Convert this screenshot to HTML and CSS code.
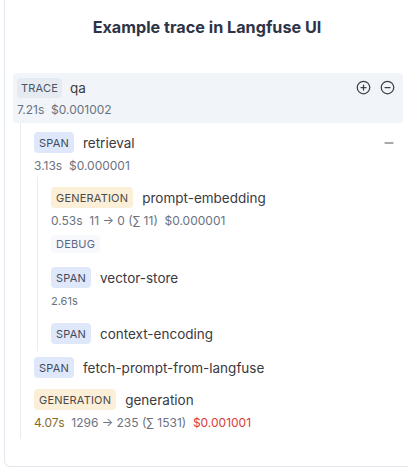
FILE: index.html
```html
<!DOCTYPE html>
<html>
<head>
<meta charset="utf-8">
<link rel="stylesheet" href="styles.css">
</head>
<body>
<div class="card">
  <h1 class="title">Example trace in Langfuse UI</h1>
  <div class="trace">
    <div class="row">
      <span class="badge b-trace">TRACE</span>
      <span class="name">qa</span>
      <span class="actions">
        <svg width="15" height="15" viewBox="0 0 24 24" fill="none" stroke="#3f3f46" stroke-width="2" stroke-linecap="round"><circle cx="12" cy="12" r="10"/><path d="M8 12h8M12 8v8"/></svg>
        <svg width="15" height="15" viewBox="0 0 24 24" fill="none" stroke="#3f3f46" stroke-width="2" stroke-linecap="round"><circle cx="12" cy="12" r="10"/><path d="M8 12h8"/></svg>
      </span>
    </div>
    <div class="metrics">7.21s&nbsp;&nbsp;$0.001002</div>
  </div>
  <div class="children outer">
    <div class="node has-children">
      <div class="row">
        <span class="badge b-span">SPAN</span>
        <span class="name">retrieval</span>
        <span class="actions">
          <svg width="12" height="12" viewBox="0 0 24 24" fill="none" stroke="#52525b" stroke-width="2" stroke-linecap="round"><path d="M4 12h16"/></svg>
        </span>
      </div>
      <div class="metrics">3.13s&nbsp;&nbsp;$0.000001</div>
      <div class="children inner">
        <div class="node">
          <div class="row">
            <span class="badge b-gen">GENERATION</span>
            <span class="name">prompt-embedding</span>
          </div>
          <div class="metrics">0.53s&nbsp;&nbsp;11 → 0 (∑ 11)&nbsp;&nbsp;$0.000001</div>
          <span class="badge b-debug">DEBUG</span>
        </div>
        <div class="node">
          <div class="row">
            <span class="badge b-span">SPAN</span>
            <span class="name">vector-store</span>
          </div>
          <div class="metrics small">2.61s</div>
        </div>
        <div class="node">
          <div class="row">
            <span class="badge b-span">SPAN</span>
            <span class="name">context-encoding</span>
          </div>
        </div>
      </div>
    </div>
    <div class="node">
      <div class="row">
        <span class="badge b-span">SPAN</span>
        <span class="name">fetch-prompt-from-langfuse</span>
      </div>
    </div>
    <div class="node">
      <div class="row">
        <span class="badge b-gen">GENERATION</span>
        <span class="name">generation</span>
      </div>
      <div class="metrics"><span class="latency">4.07s</span>&nbsp;&nbsp;1296 → 235 (∑ 1531)&nbsp;&nbsp;<span class="cost">$0.001001</span></div>
    </div>
  </div>
</div>
</body>
</html>
```

FILE: styles.css
```css
html, body {
  margin: 0;
  padding: 0;
  background: #ffffff;
}
body {
  font-family: Inter, "Noto Sans", "Liberation Sans", sans-serif;
  color: #3f3f46;
}
.card {
  margin-left: 4px;
  width: 410px;
  height: 467px;
  box-sizing: border-box;
  border-left: 1px solid #e2e8f0;
  border-bottom: 1px solid #e2e8f0;
  border-bottom-left-radius: 6px;
  padding: 17px 0 0 0;
}
.title {
  margin: 0 0 36px 0;
  width: 404px;
  text-align: center;
  font-size: 16.2px;
  line-height: 20px;
  font-weight: 700;
  color: #2e3447;
}
.trace {
  margin: 0 5px 0 8px;
  width: 390px;
  box-sizing: border-box;
  background: #f1f5f9;
  border-radius: 4px;
  padding: 4px 8px 5px 4px;
}
.row {
  display: flex;
  align-items: center;
  height: 21px;
}
.badge {
  display: inline-flex;
  align-items: center;
  height: 21px;
  padding: 0 5px;
  border-radius: 4px;
  font-size: 11px;
  letter-spacing: 0.2px;
  color: #4b5563;
}
.b-trace { background: #e6eaf1; height: 20px; padding: 0 4px; }
.b-trace + .name { margin-left: 8px; }
.b-span { background: #dfe8fa; color: #3f4a5c; }
.b-gen { background: #fcefd8; color: #4a4a4a; }
.b-debug {
  background: #f6f8fb;
  color: #5d6887;
  height: 18px;
  margin-top: 6px;
}
.name {
  margin-left: 9px;
  font-size: 13.5px;
  color: #3a3a40;
}
.actions {
  margin-left: auto;
  display: flex;
  gap: 9px;
  align-items: center;
}
.metrics {
  margin-top: 5px;
  height: 16px;
  line-height: 16px;
  font-size: 12px;
  color: #6b7280;
}
.trace .metrics { margin-top: 4px; }
.metrics.small { font-size: 11px; }
.latency { color: #8b6a2b; }
.cost { color: #dc3a3a; }
.children {
  display: flex;
  flex-direction: column;
  border-left: 1px solid #e8ecf1;
}
.outer {
  margin-left: 15px;
  width: 361px;
  padding: 9px 0 8px 13px;
  gap: 11px;
}
.inner {
  margin-top: 3px;
  margin-left: 3px;
  padding: 10px 0 7px 13px;
  gap: 14px;
}
.has-children { margin-bottom: -5px; }
.node {
  display: flex;
  flex-direction: column;
  align-items: stretch;
}
.node > .b-debug { align-self: flex-start; }
```
